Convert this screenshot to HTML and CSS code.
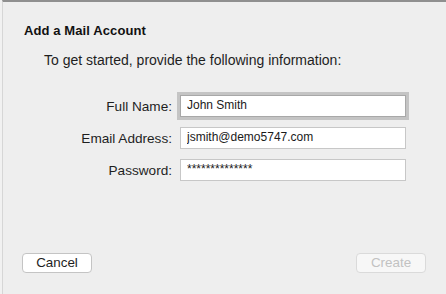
FILE: index.html
```html
<!DOCTYPE html>
<html lang="en">
<head>
    <meta charset="UTF-8">
    <title>Add a Mail Account</title>
    <link rel="stylesheet" href="styles.css">
</head>
<body>
    <div class="sheet">
        <h1 class="sheet-title">Add a Mail Account</h1>
        <p class="sheet-intro">To get started, provide the following information:</p>
        <form class="account-form">
            <label for="full-name">Full Name:</label>
            <input type="text" id="full-name" class="focused" value="John Smith">
            <label for="email">Email Address:</label>
            <input type="text" id="email" value="jsmith@demo5747.com">
            <label for="password">Password:</label>
            <input type="text" id="password" value="**************">
        </form>
        <div class="sheet-buttons">
            <button type="button" class="btn">Cancel</button>
            <button type="button" class="btn" disabled>Create</button>
        </div>
    </div>
</body>
</html>
```

FILE: styles.css
```css
body {
    margin: 0;
    padding: 0 0 0 2px;
    height: 294px;
    box-sizing: border-box;
    background: #f1f1f1;
    font-family: "Liberation Sans", Arial, sans-serif;
    font-size: 13px;
    color: #1e1e1e;
    overflow: hidden;
}

.sheet {
    display: flex;
    flex-direction: column;
    height: 100%;
    box-sizing: border-box;
    background: #eeeeee;
    border-left: 1px solid #d6d6d6;
    border-top: 2px solid #8f8f8f;
}

.sheet-title {
    font-size: 13px;
    font-weight: bold;
    line-height: 16px;
    letter-spacing: 0.1px;
    margin: 21px 0 0 21px;
    color: #111;
}

.sheet-intro {
    font-size: 14px;
    margin: 13px 0 0 41px;
    line-height: 16px;
}

.account-form {
    display: grid;
    grid-template-columns: 169px 226px;
    column-gap: 8px;
    row-gap: 10px;
    align-items: center;
    margin-top: 27px;
}

.account-form label {
    font-size: 13.6px;
    text-align: right;
    line-height: 16px;
    padding-top: 1px;
}

.account-form input {
    height: 22px;
    box-sizing: border-box;
    margin: 0;
    padding: 0 6px 2px;
    border: 1px solid #c7c7c7;
    background: #fff;
    font-family: "Liberation Sans", Arial, sans-serif;
    font-size: 12px;
    color: #1a1a1a;
    outline: none;
}

.account-form input.focused {
    border-color: #a8a8a8;
    box-shadow: 0 0 0 3px #c4c4c4;
}

.sheet-buttons {
    display: flex;
    justify-content: space-between;
    margin-top: auto;
    padding: 0 20px 21px 19px;
}

.btn {
    width: 70px;
    height: 20px;
    padding: 0 0 1px;
    border: 1px solid #c4c4c4;
    border-radius: 4px;
    background: #fff;
    font-family: "Liberation Sans", Arial, sans-serif;
    font-size: 13.4px;
    color: #1e1e1e;
}

.btn:disabled {
    border-color: #dadada;
    background: #f7f7f7;
    color: #c2c2c2;
}
```
